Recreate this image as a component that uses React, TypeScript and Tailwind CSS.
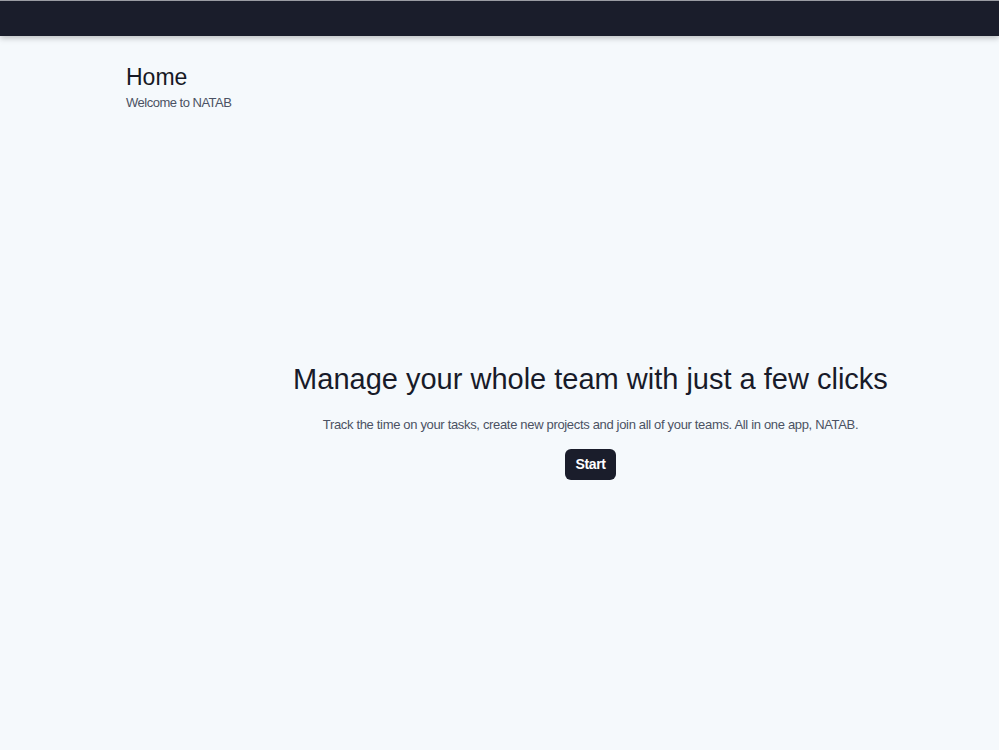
export default function App() {
  return (
    <div className="min-h-screen bg-[#f5f9fc] font-['Liberation_Sans',Arial,sans-serif] text-[#181b29]">
      <nav className="h-[36px] border-t border-[#9a9ca3] bg-[#1a1d2b] shadow-[0_2px_6px_rgba(0,0,0,0.25)]" />

      <header className="pl-[126px] pt-[27px]">
        <h1 className="text-[23px] leading-[28px] text-[#161824]">Home</h1>
        <p className="mt-[4px] text-[13px] leading-[16px] tracking-[-0.5px] text-[#4b5263]">Welcome to NATAB</p>
      </header>

      <main className="ml-[182px] flex flex-col items-center pt-[250px] text-center">
        <h2 className="text-[29px] leading-[36px] text-[#181b29]">
          Manage your whole team with just a few clicks
        </h2>
        <p className="mt-[18px] text-[13px] leading-[20px] tracking-[-0.33px] text-[#4b5263]">
          Track the time on your tasks, create new projects and join all of your teams. All in one app, NATAB.
        </p>
        <button className="mt-[14px] h-[31px] rounded-md bg-[#1a1d2b] px-[11px] text-[14px] font-bold tracking-[-0.4px] text-white">
          Start
        </button>
      </main>
    </div>
  );
}
